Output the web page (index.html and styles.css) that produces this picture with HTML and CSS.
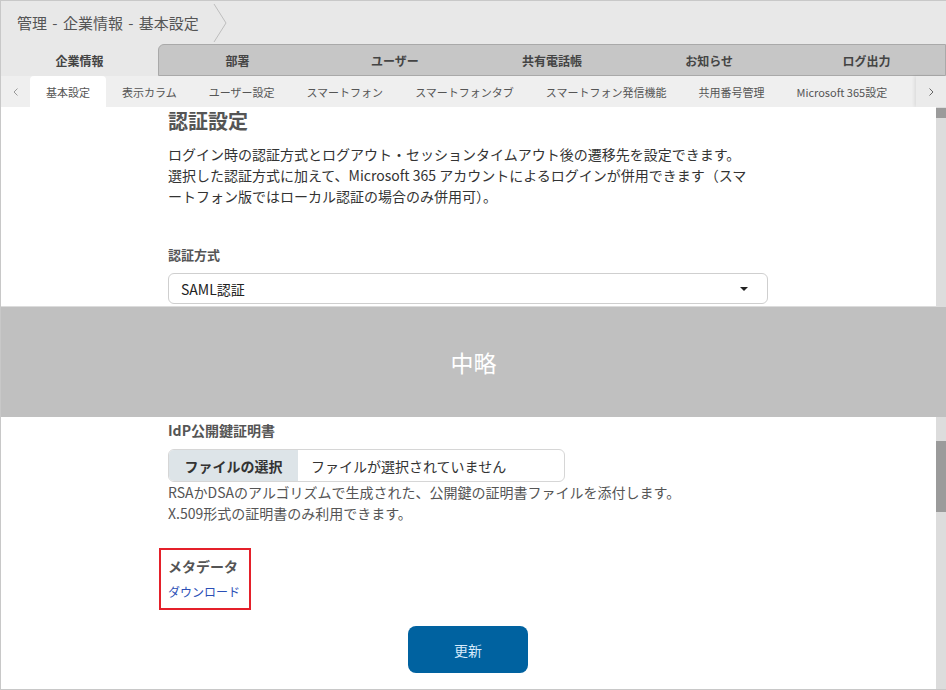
FILE: index.html
```html
<!DOCTYPE html>
<html lang="ja">
<head>
  <meta charset="utf-8">
  <title>管理 - 企業情報 - 基本設定</title>
  <link rel="stylesheet" href="styles.css">
</head>
<body>
  <div class="frame">
    <header class="crumb">
      <span>管理 - 企業情報 - 基本設定</span>
      <svg class="crumb-sep" width="14" height="38" viewBox="0 0 14 38"><polyline points="1,0 13,19 1,38" fill="none" stroke="#bdbdbd" stroke-width="1"/></svg>
    </header>

    <nav class="tabs">
      <div class="tab active">企業情報</div>
      <div class="tab-rest">
        <div class="tab">部署</div>
        <div class="tab">ユーザー</div>
        <div class="tab">共有電話帳</div>
        <div class="tab">お知らせ</div>
        <div class="tab">ログ出力</div>
      </div>
    </nav>

    <nav class="subtabs">
      <div class="sub-arrow left">
        <svg width="5" height="8" viewBox="0 0 5 8"><polyline points="4.5,0.5 1,4 4.5,7.5" fill="none" stroke="#9a9a9a" stroke-width="1"/></svg>
      </div>
      <div class="sub-list">
        <div class="sub-item active">基本設定</div>
        <div class="sub-item">表示カラム</div>
        <div class="sub-item">ユーザー設定</div>
        <div class="sub-item">スマートフォン</div>
        <div class="sub-item">スマートフォンタブ</div>
        <div class="sub-item">スマートフォン発信機能</div>
        <div class="sub-item">共用番号管理</div>
        <div class="sub-item">Microsoft 365設定</div>
      </div>
      <div class="sub-arrow right">
        <svg width="5" height="8" viewBox="0 0 5 8"><polyline points="0.5,0.5 4,4 0.5,7.5" fill="none" stroke="#666" stroke-width="1"/></svg>
      </div>
    </nav>

    <section class="pane upper">
      <div class="pane-main">
        <h2>認証設定</h2>
        <p class="lead">ログイン時の認証方式とログアウト・セッションタイムアウト後の遷移先を設定できます。<br>選択した認証方式に加えて、Microsoft 365 アカウントによるログインが併用できます（スマ<br>ートフォン版ではローカル認証の場合のみ併用可）。</p>
        <div class="field-label">認証方式</div>
        <div class="select">
          <span>SAML認証</span>
          <span class="caret"></span>
        </div>
      </div>
      <div class="scroll"><div class="thumb thumb-top"></div></div>
    </section>

    <div class="omitted">中略</div>

    <section class="pane lower">
      <div class="pane-main">
        <div class="label">IdP公開鍵証明書</div>
        <div class="file">
          <div class="file-btn">ファイルの選択</div>
          <div class="file-name">ファイルが選択されていません</div>
        </div>
        <p class="help">RSAかDSAのアルゴリズムで生成された、公開鍵の証明書ファイルを添付します。<br>X.509形式の証明書のみ利用できます。</p>

        <div class="meta">
          <div class="label">メタデータ</div>
          <a class="meta-link" href="#">ダウンロード</a>
        </div>

        <div class="actions">
          <button class="btn">更新</button>
        </div>
      </div>
      <div class="scroll"><div class="thumb thumb-mid"></div></div>
    </section>
  </div>
</body>
</html>
```

FILE: styles.css
```css
* {
  box-sizing: border-box;
}

body {
  margin: 0;
  background: #fff;
  font-family: "Noto Sans CJK JP", "Noto Sans", sans-serif;
  color: #333;
}

.frame {
  width: 946px;
  height: 690px;
  border: 1px solid #c8c8c8;
  border-right: 0;
  display: flex;
  flex-direction: column;
  overflow: hidden;
}

/* breadcrumb */
.crumb {
  height: 43px;
  flex-shrink: 0;
  background: #e8e8e8;
  display: flex;
  align-items: center;
  padding-left: 16px;
  font-size: 15px;
  word-spacing: 2px;
  color: #555;
}

.crumb-sep {
  margin-left: 14px;
}

/* main tabs */
.tabs {
  height: 32px;
  flex-shrink: 0;
  display: flex;
  background: #e8e8e8;
}

.tab {
  width: 157px;
  display: flex;
  align-items: center;
  justify-content: center;
  font-size: 12px;
  font-weight: bold;
  color: #444;
}

.tab-rest {
  flex: 1;
  display: flex;
  background: #c6c6c6;
  border: 1px solid #a9a9a9;
  border-top-left-radius: 6px;
}

.tab-rest .tab {
  flex: 1;
  width: auto;
}

/* sub tabs */
.subtabs {
  height: 31px;
  flex-shrink: 0;
  display: flex;
  background: #efefef;
  font-size: 11px;
  color: #555;
}

.sub-arrow {
  width: 29px;
  flex-shrink: 0;
  display: flex;
  align-items: center;
  justify-content: center;
}

.sub-arrow.right {
  width: 30px;
  background: #ebebeb;
  box-shadow: -2px 0 3px rgba(0, 0, 0, 0.07);
}

.sub-list {
  flex: 1;
  display: flex;
  overflow: hidden;
}

.sub-item {
  padding: 0 16px;
  display: flex;
  align-items: center;
  white-space: nowrap;
}

.sub-item.active {
  background: #fff;
  border-radius: 4px 4px 0 0;
}

/* content panes */
.pane {
  display: flex;
  flex-shrink: 0;
  background: #fff;
}

.pane.upper {
  height: 200px;
  border-bottom: 1px solid #dcdcdc;
}

.pane.lower {
  flex: 1;
}

.pane-main {
  flex: 1;
  padding-left: 167px;
}

.lower .pane-main {
  padding-top: 3px;
}

.scroll {
  width: 10px;
  flex-shrink: 0;
  background: #dcdcdc;
}

.thumb {
  background: #9b9b9b;
}

.thumb-top {
  margin-top: 1px;
  height: 10px;
}

.thumb-mid {
  margin-top: 24px;
  height: 71px;
}

h2 {
  margin: 0;
  font-size: 20px;
  line-height: 28px;
  color: #555;
}

.lead {
  margin: 9px 0 0;
  font-size: 14px;
  line-height: 21px;
  color: #333;
  white-space: nowrap;
}

.field-label {
  margin-top: 38px;
  font-size: 13px;
  line-height: 20px;
  font-weight: bold;
  color: #555;
}

.select {
  margin-top: 8px;
  width: 600px;
  height: 31px;
  border: 1px solid #cfcfcf;
  border-radius: 6px;
  display: flex;
  align-items: center;
  justify-content: space-between;
  padding: 0 19px 0 12px;
  font-size: 14px;
  color: #222;
}

.caret {
  width: 0;
  height: 0;
  border-left: 4px solid transparent;
  border-right: 4px solid transparent;
  border-top: 4px solid #222;
}

.omitted {
  height: 110px;
  flex-shrink: 0;
  background: #c0c0c0;
  display: flex;
  align-items: center;
  justify-content: center;
  font-size: 23px;
  color: #fff;
}

.label {
  font-size: 14px;
  line-height: 20px;
  font-weight: bold;
  color: #555;
}

.file {
  margin-top: 9px;
  width: 397px;
  height: 33px;
  border: 1px solid #d6d6d6;
  border-radius: 6px;
  display: flex;
  overflow: hidden;
  font-size: 14px;
  color: #333;
}

.file-btn {
  width: 129px;
  background: #dde4e8;
  font-weight: bold;
  display: flex;
  align-items: center;
  justify-content: center;
}

.file-name {
  padding-left: 13px;
  display: flex;
  align-items: center;
}

.help {
  margin: 0;
  font-size: 14px;
  line-height: 21px;
  color: #555;
}

.meta {
  margin: 24px 0 0 -9px;
  width: 92px;
  border: 2px solid #e4202a;
  padding: 6px 0 7px 7px;
}

.meta-link {
  display: block;
  margin-top: 7px;
  font-size: 12px;
  line-height: 18px;
  color: #2b4fb6;
  text-decoration: none;
}

.actions {
  width: 600px;
  margin-top: 16px;
  display: flex;
  justify-content: center;
}

.btn {
  width: 120px;
  height: 47px;
  border: 0;
  border-radius: 8px;
  background: #0062a0;
  color: #d6eafc;
  font-family: inherit;
  font-size: 14px;
}
```
